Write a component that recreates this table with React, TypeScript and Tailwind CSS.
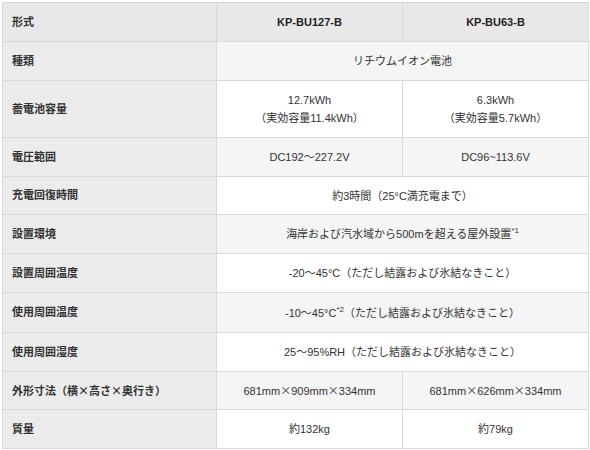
import React from "react";

type Row = {
  label: React.ReactNode;
  key: string;
  cells: React.ReactNode[];
  bg: string;
  h: string;
};

const X = () => <span style={{ fontFamily: '"Noto Sans CJK JP", sans-serif' }}>×</span>;
const Sup = ({ children }: { children: React.ReactNode }) => (
  <sup className="text-[8px] relative -top-[5px]">{children}</sup>
);

const rows: Row[] = [
  { key: "a", label: "種類", cells: ["リチウムイオン電池"], bg: "bg-[#f5f5f5]", h: "h-[39px]" },
  {
    key: "b",
    label: "蓄電池容量",
    cells: [
      <>12.7kWh<br />（実効容量11.4kWh）</>,
      <>6.3kWh<br />（実効容量5.7kWh）</>,
    ],
    bg: "bg-white",
    h: "h-[57px]",
  },
  { key: "c", label: "電圧範囲", cells: ["DC192～227.2V", "DC96~113.6V"], bg: "bg-[#f5f5f5]", h: "h-[39px]" },
  { key: "d", label: "充電回復時間", cells: ["約3時間（25°C満充電まで）"], bg: "bg-white", h: "h-[38px]" },
  {
    key: "e",
    label: "設置環境",
    cells: [<>海岸および汽水域から500mを超える屋外設置<Sup>*1</Sup></>],
    bg: "bg-[#f5f5f5]",
    h: "h-[39px]",
  },
  { key: "f", label: "設置周囲温度", cells: ["-20～45°C（ただし結露および氷結なきこと）"], bg: "bg-white", h: "h-[39px]" },
  {
    key: "g",
    label: "使用周囲温度",
    cells: [<>-10～45°C<Sup>*2</Sup>（ただし結露および氷結なきこと）</>],
    bg: "bg-[#f5f5f5]",
    h: "h-[40px]",
  },
  { key: "h", label: "使用周囲湿度", cells: ["25～95%RH（ただし結露および氷結なきこと）"], bg: "bg-white", h: "h-[39px]" },
  {
    key: "i",
    label: <>外形寸法（横<X />高さ<X />奥行き）</>,
    cells: [<>681mm<X />909mm<X />334mm</>, <>681mm<X />626mm<X />334mm</>],
    bg: "bg-[#f5f5f5]",
    h: "h-[38px]",
  },
  { key: "j", label: "質量", cells: ["約132kg", "約79kg"], bg: "bg-white", h: "h-[39px]" },
];

export default function App() {
  return (
    <div
      className="w-[590px] h-[450px] bg-white pt-[2px] pl-[2px]"
      style={{ fontFamily: '"Liberation Sans", "Noto Sans CJK JP", sans-serif' }}
    >
      <table className="border-collapse w-[586px] table-fixed text-[11px] text-[#333]">
        <colgroup>
          <col className="w-[214px]" />
          <col className="w-[186px]" />
          <col className="w-[186px]" />
        </colgroup>
        <tbody>
          <tr className="h-[39px]">
            <th className="border border-[#d9d9d9] bg-[#e8e8e8] text-left pl-[9px] font-bold text-[#333]">形式</th>
            <th className="border border-[#d9d9d9] bg-[#e8e8e8] text-center font-bold text-[#222]">KP-BU127-B</th>
            <th className="border border-[#d9d9d9] bg-[#e8e8e8] text-center font-bold text-[#222]">KP-BU63-B</th>
          </tr>
          {rows.map((r) => (
            <tr key={r.key} className={r.h}>
              <th className="border border-[#d9d9d9] bg-[#ebebeb] text-left pl-[9px] font-bold text-[#333]">
                {r.label}
              </th>
              {r.cells.length === 1 ? (
                <td colSpan={2} className={`border border-[#d9d9d9] ${r.bg} text-center leading-[18px]`}>
                  {r.cells[0]}
                </td>
              ) : (
                r.cells.map((c, i) => (
                  <td key={i} className={`border border-[#d9d9d9] ${r.bg} text-center leading-[18px]`}>
                    {c}
                  </td>
                ))
              )}
            </tr>
          ))}
        </tbody>
      </table>
    </div>
  );
}
